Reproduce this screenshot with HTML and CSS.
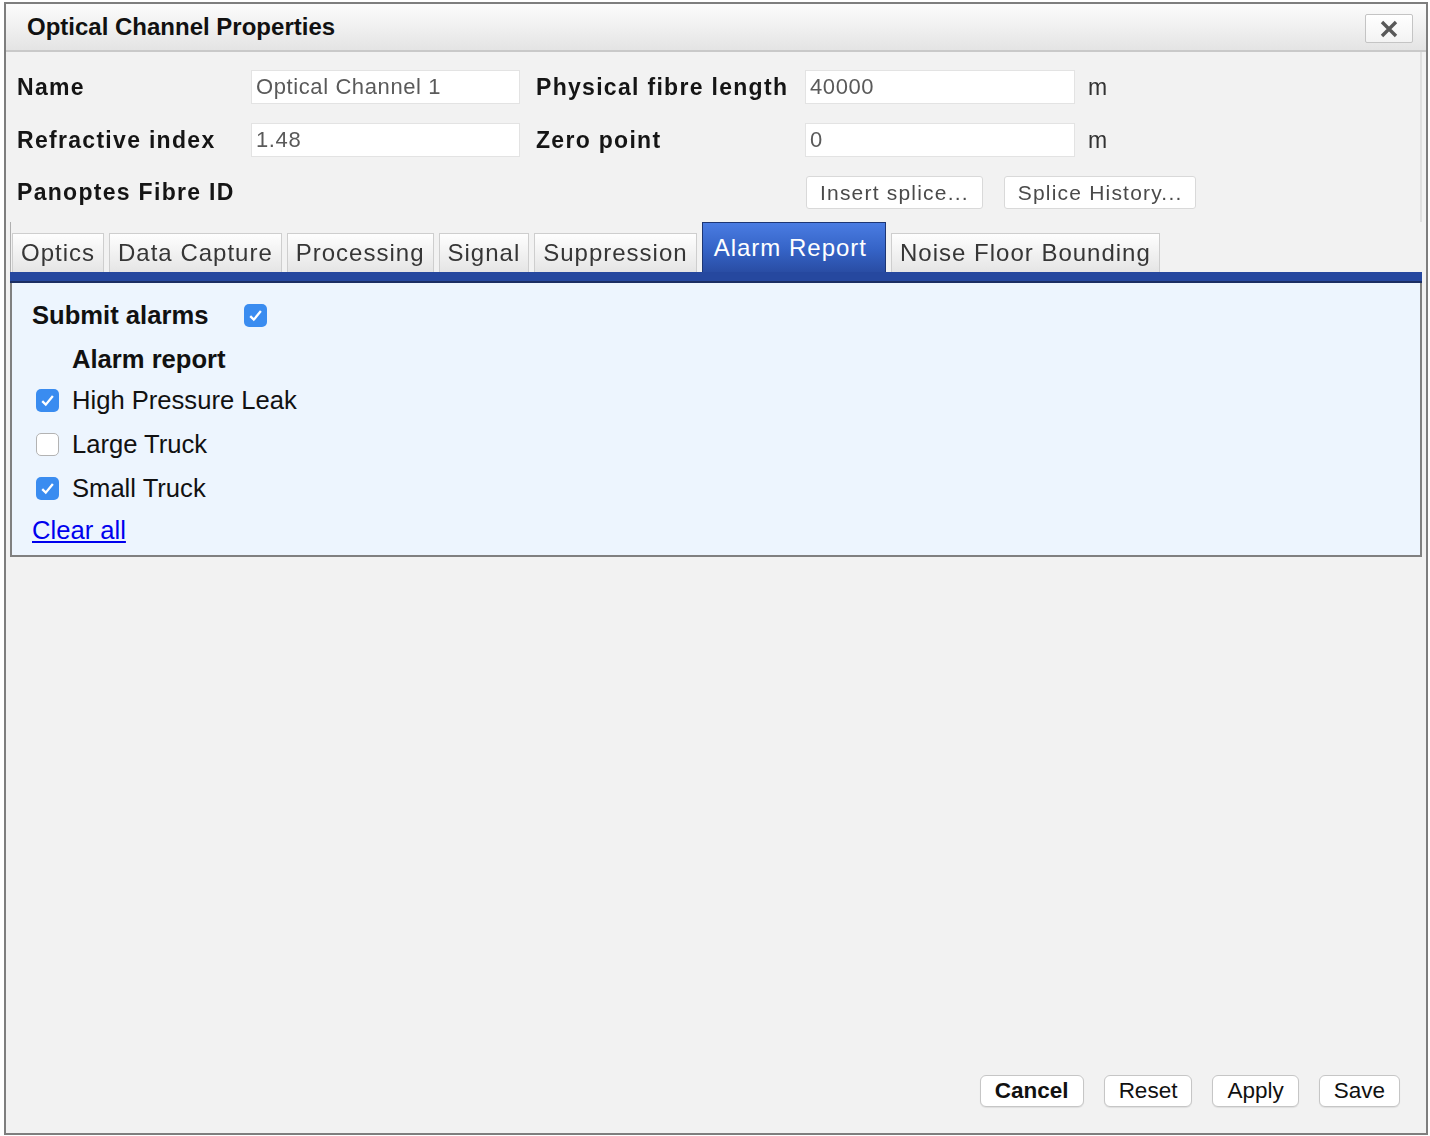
FILE: index.html
```html
<!DOCTYPE html>
<html>
<head>
<meta charset="utf-8">
<title>Optical Channel Properties</title>
<link rel="stylesheet" href="styles.css">
</head>
<body>
<div class="dialog">
  <div class="titlebar">
    <span class="title">Optical Channel Properties</span>
    <button class="close" aria-label="Close">
      <svg width="18" height="18" viewBox="0 0 18 18"><path d="M2 2L16 16M16 2L2 16" stroke="#595959" stroke-width="3.4"/></svg>
    </button>
  </div>
  <div class="content">
    <div class="form">
      <div class="lbl">Name</div>
      <div class="field">Optical Channel 1</div>
      <div class="lbl lbl2">Physical fibre length</div>
      <div class="field">40000</div>
      <div class="unit">m</div>

      <div class="lbl">Refractive index</div>
      <div class="field">1.48</div>
      <div class="lbl lbl2">Zero point</div>
      <div class="field">0</div>
      <div class="unit">m</div>

      <div class="lbl span3">Panoptes Fibre ID</div>
      <div class="splice-btns">
        <button class="sbtn">Insert splice...</button>
        <button class="sbtn">Splice History...</button>
      </div>
    </div>

    <div class="tabs">
      <div class="tab">Optics</div>
      <div class="tab">Data Capture</div>
      <div class="tab">Processing</div>
      <div class="tab">Signal</div>
      <div class="tab">Suppression</div>
      <div class="tab active">Alarm Report</div>
      <div class="tab">Noise Floor Bounding</div>
    </div>
    <div class="tabbar"></div>

    <div class="panel">
      <div class="submit-row">
        <span class="submit-label">Submit alarms</span>
        <span class="cb on"><svg width="23" height="23" viewBox="0 0 24 24"><path d="M6.5 12.6L10.2 16.3L17.6 7.4" fill="none" stroke="#fff" stroke-width="2.4"/></svg></span>
      </div>
      <div class="heading">Alarm report</div>
      <div class="item">
        <span class="cb on"><svg width="23" height="23" viewBox="0 0 24 24"><path d="M6.5 12.6L10.2 16.3L17.6 7.4" fill="none" stroke="#fff" stroke-width="2.4"/></svg></span>
        <span>High Pressure Leak</span>
      </div>
      <div class="item">
        <span class="cb off"></span>
        <span>Large Truck</span>
      </div>
      <div class="item">
        <span class="cb on"><svg width="23" height="23" viewBox="0 0 24 24"><path d="M6.5 12.6L10.2 16.3L17.6 7.4" fill="none" stroke="#fff" stroke-width="2.4"/></svg></span>
        <span>Small Truck</span>
      </div>
      <div class="clear"><a href="#">Clear all</a></div>
    </div>
  </div>
  <div class="footer">
    <button class="fbtn primary">Cancel</button>
    <button class="fbtn">Reset</button>
    <button class="fbtn">Apply</button>
    <button class="fbtn">Save</button>
  </div>
</div>
</body>
</html>
```

FILE: styles.css
```css
html, body {
  background: #ffffff;
}
body {
  margin: 2px 0 0 4px;
  font-family: "Liberation Sans", Arial, Helvetica, sans-serif;
  color: #111;
}
.dialog {
  width: 1424px;
  height: 1133px;
  box-sizing: border-box;
  border: 2px solid #7e7e7e;
  background: #f2f2f2;
  display: flex;
  flex-direction: column;
}
.titlebar {
  height: 46px;
  flex: none;
  border-bottom: 2px solid #c9c9c9;
  background: linear-gradient(#fcfcfc, #e4e4e4);
  display: flex;
  align-items: center;
  justify-content: space-between;
  padding: 0 13px 0 21px;
}
.title {
  font-size: 24px;
  font-weight: bold;
  color: #111;
}
.close {
  width: 48px;
  height: 29px;
  margin-top: 3px;
  padding: 0;
  background: linear-gradient(#ffffff, #f3f3f3);
  border: 1px solid #c4c4c4;
  border-radius: 2px;
  display: flex;
  align-items: center;
  justify-content: center;
}
.content {
  flex: 1;
  display: flex;
  flex-direction: column;
}
.form {
  display: grid;
  grid-template-columns: 234px 269px 285px 270px auto;
  grid-template-rows: 34px 34px 33px;
  row-gap: 19px;
  padding: 18px 0 13px 11px;
  margin-right: 4px;
  border-right: 2px solid #e0e0e0;
  filter: blur(0.7px);
}
.lbl {
  font-size: 23px;
  font-weight: bold;
  letter-spacing: 1.3px;
  color: #151515;
  display: flex;
  align-items: center;
  white-space: nowrap;
}
.lbl2 {
  padding-left: 16px;
}
.span3 {
  grid-column: 1 / span 3;
}
.field {
  background: #fff;
  border: 1px solid #e3e3e3;
  box-sizing: border-box;
  font-size: 22px;
  letter-spacing: 0.6px;
  color: #5a5a5a;
  padding-left: 4px;
  display: flex;
  align-items: center;
}
.unit {
  padding-left: 13px;
  font-size: 23px;
  letter-spacing: 1px;
  color: #333;
  display: flex;
  align-items: center;
}
.splice-btns {
  grid-column: 4 / span 2;
  display: flex;
  gap: 21px;
  padding-left: 1px;
}
.sbtn {
  height: 33px;
  padding: 0 13px;
  background: #fff;
  border: 1px solid #d9d9d9;
  border-radius: 3px;
  font-family: inherit;
  font-size: 21px;
  letter-spacing: 1.2px;
  color: #4a4a4a;
}
.tabs {
  margin: 0 4px;
  height: 50px;
  flex: none;
  display: flex;
  align-items: flex-end;
  gap: 5px;
  padding-left: 1px;
  border-left: 1px solid #b0b0b0;
}
.tab {
  height: 39px;
  box-sizing: border-box;
  padding: 0 8px;
  border: 1px solid #cecece;
  border-bottom: 0;
  background: linear-gradient(#fefefe, #e5e5e5);
  font-size: 24px;
  letter-spacing: 1px;
  color: #363636;
  display: flex;
  align-items: center;
  white-space: nowrap;
  filter: blur(0.6px);
}
.tab.active {
  height: 50px;
  padding: 0 18px 0 11px;
  background: linear-gradient(#4a7ce2, #3563c6 55%, #2a4da4);
  border-color: #1d3674;
  color: #fff;
  filter: none;
}
.tabbar {
  margin: 0 4px;
  height: 9px;
  flex: none;
  background: #26489f;
  border-bottom: 2px solid #1b2e63;
}
.panel {
  margin: 0 4px;
  background: #edf5fe;
  border: 2px solid #808080;
  border-top: 0;
  padding: 12px 20px 5px;
  font-size: 25.6px;
  color: #111;
}
.submit-row {
  height: 40px;
  display: flex;
  align-items: center;
}
.submit-label {
  width: 212px;
  font-weight: bold;
}
.heading {
  margin-top: 5px;
  height: 38px;
  padding-left: 40px;
  display: flex;
  align-items: center;
  font-weight: bold;
}
.item {
  height: 44px;
  display: flex;
  align-items: center;
  gap: 13px;
  padding-left: 4px;
}
.cb {
  width: 23px;
  height: 23px;
  flex: none;
  box-sizing: border-box;
  border-radius: 5px;
  display: flex;
  align-items: center;
  justify-content: center;
}
.cb.on {
  background: #3a8cf0;
}
.cb.off {
  background: #fff;
  border: 1px solid #b3b3b3;
}
.clear {
  height: 40px;
  display: flex;
  align-items: center;
}
.clear a {
  color: #0000ee;
  text-decoration: underline;
}
.footer {
  flex: none;
  display: flex;
  justify-content: flex-end;
  gap: 20px;
  padding: 0 26px 26px 0;
}
.fbtn {
  height: 32px;
  padding: 0 14px;
  background: #fff;
  border: 1px solid #c6c6c6;
  border-radius: 6px;
  box-shadow: 0 1px 1px rgba(0, 0, 0, 0.08);
  font-family: inherit;
  font-size: 22.5px;
  color: #111;
}
.fbtn.primary {
  font-weight: bold;
}
```
